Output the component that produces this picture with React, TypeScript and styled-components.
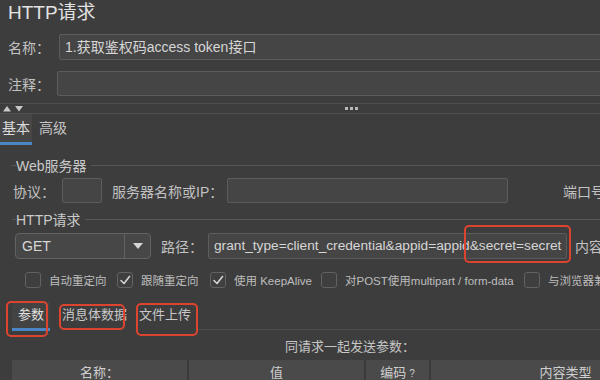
import React from "react";
import styled, { createGlobalStyle } from "styled-components";

const GlobalStyle = createGlobalStyle`
  html, body {
    margin: 0;
    padding: 0;
    background: #3d3d3d;
    overflow: hidden;
  }
  body {
    font-family: "Liberation Sans", "Noto Sans CJK SC", sans-serif;
    color: #c4c4c4;
  }
`;

const Page = styled.div`
  width: 700px;
  height: 380px;
  overflow: hidden;
  background: #3d3d3d;
`;

const Title = styled.div`
  height: 30px;
  padding-left: 8px;
  font-size: 19px;
  line-height: 26px;
  color: #e2e2e2;
`;

const FieldRow = styled.div<{ $top: number; $left?: number }>`
  display: flex;
  align-items: center;
  margin-top: ${(p) => p.$top}px;
  padding-left: ${(p) => p.$left ?? 8}px;
`;

const Label = styled.span<{ $width?: number; $gap?: number }>`
  flex: none;
  width: ${(p) => (p.$width ? `${p.$width}px` : "auto")};
  margin-left: ${(p) => p.$gap ?? 0}px;
  font-size: 14px;
  color: #c2c2c2;
  white-space: nowrap;
`;

const TextInput = styled.div<{ $width?: number; $height: number; $size?: number }>`
  position: relative;
  box-sizing: border-box;
  flex: ${(p) => (p.$width ? "none" : "1")};
  width: ${(p) => (p.$width ? `${p.$width}px` : "auto")};
  height: ${(p) => p.$height}px;
  margin-right: ${(p) => (p.$width ? 0 : 10)}px;
  padding-left: 5px;
  background: #454545;
  border: 1px solid #5c5c5c;
  border-radius: 2px;
  font-size: ${(p) => p.$size ?? 14}px;
  line-height: ${(p) => p.$height - 2}px;
  color: #d6d6d6;
  white-space: nowrap;
`;

const Splitter = styled.div`
  margin-top: 7px;
  height: 9px;
  border-top: 1px solid #4f4f4f;
  border-bottom: 1px solid #4f4f4f;
  display: grid;
  grid-template-columns: 1fr auto 1fr;
  align-items: center;
`;

const Arrows = styled.svg`
  margin-left: 3px;
  display: block;
`;

const Dots = styled.div`
  display: flex;
  gap: 2px;
  padding-left: 3px;
`;

const Dot = styled.span`
  width: 3px;
  height: 3px;
  background: #b8b8b8;
`;

const MainTabs = styled.div`
  display: flex;
  align-items: stretch;
  height: 31px;
`;

const MainTab = styled.div<{ $active?: boolean }>`
  padding: 0 ${(p) => (p.$active ? "2px" : "7px")};
  font-size: 14px;
  line-height: 28px;
  color: ${(p) => (p.$active ? "#dcdcdc" : "#c4c4c4")};
  background: ${(p) => (p.$active ? "#464646" : "transparent")};
  border-bottom: 3px solid ${(p) => (p.$active ? "#4a85c6" : "transparent")};
`;

const GroupTitle = styled.div<{ $top: number }>`
  display: flex;
  align-items: center;
  margin-top: ${(p) => p.$top}px;
  height: 16px;
  padding-left: 12px;
  font-size: 14px;
  color: #cacaca;

  &::before {
    content: "";
    width: 4px;
    border-top: 1px solid #575757;
  }
  &::after {
    content: "";
    flex: 1;
    margin-left: 4px;
    border-top: 1px solid #575757;
  }
`;

const Select = styled.div`
  flex: none;
  display: flex;
  box-sizing: border-box;
  width: 136px;
  height: 26px;
  background: #474747;
  border: 1px solid #626262;
  border-radius: 4px;
`;

const SelectValue = styled.span`
  flex: 1;
  padding-left: 6px;
  font-size: 14px;
  line-height: 24px;
  color: #d8d8d8;
`;

const SelectButton = styled.span`
  flex: none;
  width: 25px;
  display: flex;
  align-items: center;
  justify-content: center;
  border-left: 1px solid #626262;
`;

const Mark = styled.div<{ $l: number; $t: number; $w: number; $h: number }>`
  position: absolute;
  left: ${(p) => p.$l}px;
  top: ${(p) => p.$t}px;
  width: ${(p) => p.$w}px;
  height: ${(p) => p.$h}px;
  box-sizing: border-box;
  border: 2.5px solid #dc4430;
  border-radius: 5px;
  pointer-events: none;
`;

const Checks = styled.div`
  display: flex;
  align-items: center;
  margin-top: 13px;
  padding-left: 25px;
  height: 16px;
`;

const CheckItem = styled.label<{ $width?: number }>`
  flex: none;
  width: ${(p) => (p.$width ? `${p.$width}px` : "auto")};
  display: flex;
  align-items: center;
  gap: 8px;
  font-size: 11.5px;
  color: #bdbdbd;
  white-space: nowrap;
`;

const Box = styled.span`
  flex: none;
  box-sizing: border-box;
  width: 16px;
  height: 16px;
  border: 1px solid #626262;
  border-radius: 3px;
  background: #3f3f3f;
  display: flex;
  align-items: center;
  justify-content: center;
`;

const SubTabs = styled.div`
  display: flex;
  align-items: stretch;
  margin-top: 14px;
  padding-left: 12px;
  height: 29px;
`;

const SubTab = styled.div<{ $active?: boolean }>`
  position: relative;
  padding: 0 6px;
  margin-right: ${(p) => (p.$active ? 6 : 0)}px;
  font-size: 13px;
  line-height: 26px;
  color: ${(p) => (p.$active ? "#e0e0e0" : "#c8c8c8")};
  background: ${(p) => (p.$active ? "#434343" : "transparent")};
  border-bottom: 3px solid ${(p) => (p.$active ? "#4a85c6" : "transparent")};
`;

const TabRule = styled.div`
  flex: 1;
  border-bottom: 1px solid #4c4c4c;
  margin-bottom: 1px;
`;

const Caption = styled.div`
  margin-top: 8px;
  text-align: center;
  font-size: 13px;
  line-height: 16px;
  color: #c6c6c6;
`;

const TableHead = styled.div`
  display: grid;
  grid-template-columns: 175px 175px 63px 1fr;
  gap: 2px;
  margin: 5px 0 0 12px;
  background: #3a3a3a;
`;

const HeadCell = styled.div`
  height: 24px;
  background: #4a4a4a;
  text-align: center;
  font-size: 13px;
  line-height: 26px;
  color: #cfcfcf;
`;

const Hint = styled.span`
  font-size: 10px;
  margin-left: 3px;
`;

const CheckGlyph = () => (
  <svg width="14" height="14" viewBox="0 0 14 14">
    <path d="M3 7.5 L6 10.5 L11.5 3.5" fill="none" stroke="#d4d4d4" strokeWidth="1.6" strokeLinecap="round" strokeLinejoin="round" />
  </svg>
);

const Check: React.FC<{ checked?: boolean; label: string; width?: number }> = ({ checked, label, width }) => (
  <CheckItem $width={width}>
    <Box>{checked && <CheckGlyph />}</Box>
    {label}
  </CheckItem>
);

export default function App() {
  return (
    <Page>
      <GlobalStyle />
      <Title>HTTP请求</Title>

      <FieldRow $top={4}>
        <Label $width={51}>名称：</Label>
        <TextInput $height={26}>1.获取鉴权码access token接口</TextInput>
      </FieldRow>
      <FieldRow $top={11}>
        <Label $width={49}>注释：</Label>
        <TextInput $height={25} />
      </FieldRow>

      <Splitter>
        <Arrows width="22" height="7" viewBox="0 0 22 7">
          <path d="M0 6.5 L4 1 L8 6.5 Z" fill="#c8c8c8" />
          <path d="M12 1 L20 1 L16 6.5 Z" fill="#c8c8c8" />
        </Arrows>
        <Dots>
          <Dot />
          <Dot />
          <Dot />
        </Dots>
        <span />
      </Splitter>

      <MainTabs>
        <MainTab $active>基本</MainTab>
        <MainTab>高级</MainTab>
      </MainTabs>

      <GroupTitle $top={12}>Web服务器</GroupTitle>
      <FieldRow $top={5} $left={13}>
        <Label $width={49}>协议：</Label>
        <TextInput $width={40} $height={25} />
        <Label $width={115} $gap={10}>服务器名称或IP：</Label>
        <TextInput $width={281} $height={25} />
        <Label $gap={55}>端口号</Label>
      </FieldRow>

      <GroupTitle $top={8}>HTTP请求</GroupTitle>
      <FieldRow $top={6} $left={15}>
        <Select>
          <SelectValue>GET</SelectValue>
          <SelectButton>
            <svg width="10" height="6" viewBox="0 0 10 6">
              <path d="M0 0 L10 0 L5 6 Z" fill="#d6d6d6" />
            </svg>
          </SelectButton>
        </Select>
        <Label $width={47} $gap={10}>路径：</Label>
        <TextInput $width={359} $height={26} $size={13.7}>
          grant_type=client_credential&amp;appid=appid&amp;secret=secret
          <Mark $l={255} $t={-9} $w={107} $h={38} />
        </TextInput>
        <Label $gap={8}>内容</Label>
      </FieldRow>

      <Checks>
        <Check width={92} label="自动重定向" />
        <Check width={93} checked label="跟随重定向" />
        <Check width={111} checked label="使用 KeepAlive" />
        <Check width={203} label="对POST使用multipart / form-data" />
        <Check label="与浏览器兼" />
      </Checks>

      <SubTabs>
        <SubTab $active>
          参数
          <Mark $l={-6} $t={-1} $w={42} $h={36} />
        </SubTab>
        <SubTab>
          消息体数据
          <Mark $l={3} $t={2} $w={66} $h={26} />
        </SubTab>
        <SubTab>
          文件上传
          <Mark $l={3} $t={1} $w={62} $h={33} />
        </SubTab>
        <TabRule />
      </SubTabs>

      <Caption>同请求一起发送参数：</Caption>
      <TableHead>
        <HeadCell>名称：</HeadCell>
        <HeadCell>值</HeadCell>
        <HeadCell>
          编码<Hint>?</Hint>
        </HeadCell>
        <HeadCell>内容类型</HeadCell>
      </TableHead>
    </Page>
  );
}
